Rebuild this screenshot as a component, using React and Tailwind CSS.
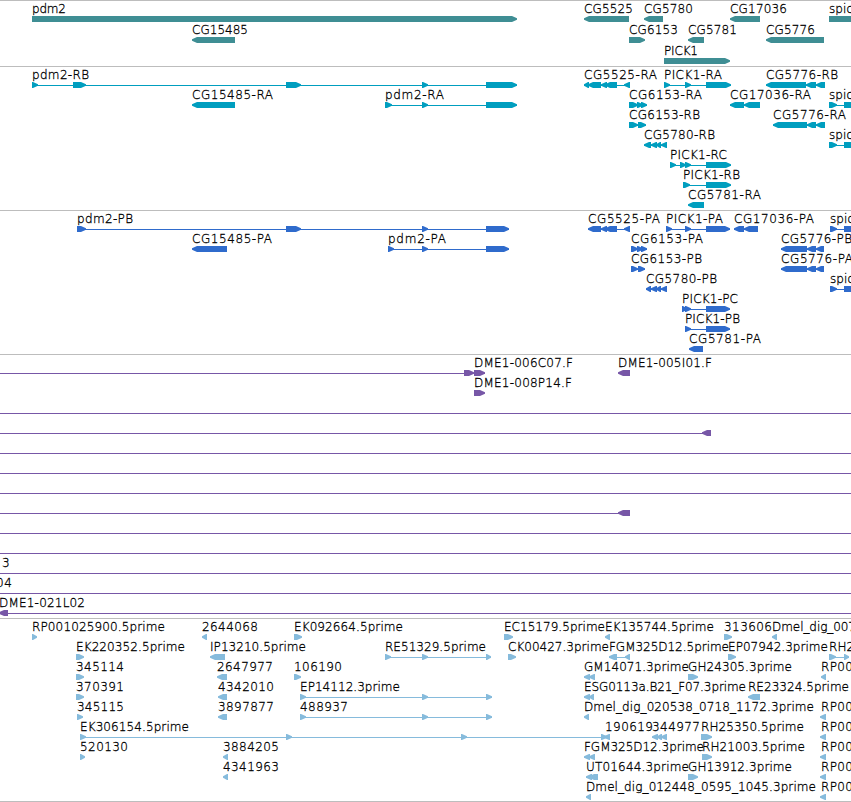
const VIEW_WIDTH = 851;

// feature: [row, label, labelX, labelWidth, direction, exons, line]
// exons are [start, end] pairs, line is the optional connector span
const SPIC_R = [[829, 837], [844, 870]];
const SPIC_P = [[830, 837], [844, 870]];

const tracks = [
  {
    id: "genes",
    className: "h-[66px] text-[#3f8e94]",
    rowHeight: 21,
    features: [
      [0, "pdm2", 32, 34, "R", [[32, 517]]],
      [0, "CG5525", 584, 49, "L", [[584, 629]]],
      [0, "CG5780", 644, 49, "L", [[644, 663]]],
      [0, "CG17036", 730, 57, "L", [[730, 760]]],
      [0, "spic", 829, 24, "R", [[829, 870]]],
      [1, "CG15485", 192, 56, "L", [[192, 235]]],
      [1, "CG6153", 629, 49, "R", [[629, 645]]],
      [1, "CG5781", 688, 49, "L", [[688, 704]]],
      [1, "CG5776", 766, 49, "L", [[766, 824]]],
      [2, "PICK1", 664, 34, "R", [[664, 730]]],
    ],
  },
  {
    id: "transcripts",
    className: "h-36 text-[#009ebf]",
    rowHeight: 20,
    features: [
      [0, "pdm2-RB", 32, 57, "R", [[32, 38], [73, 86], [286, 301], [422, 428], [486, 517]]],
      [0, "CG5525-RA", 584, 73, "L", [[584, 589], [588, 601], [601, 607], [605, 617], [624, 630]]],
      [0, "PICK1-RA", 664, 58, "R", [[664, 670], [685, 691], [706, 731]]],
      [0, "CG5776-RB", 766, 72, "L", [[766, 806], [806, 816], [816, 825]]],
      [1, "CG15485-RA", 192, 81, "L", [[192, 235]]],
      [1, "pdm2-RA", 385, 59, "R", [[385, 392], [422, 428], [486, 517]]],
      [1, "CG6153-RA", 629, 73, "R", [[629, 638], [637, 643], [641, 647]]],
      [1, "CG17036-RA", 730, 81, "L", [[730, 744], [744, 760]]],
      [1, "spic", 829, 24, "R", SPIC_R],
      [2, "CG6153-RB", 629, 71, "R", [[629, 638], [638, 646]]],
      [2, "CG5776-RA", 773, 73, "L", [[773, 807], [807, 816], [816, 825]]],
      [3, "CG5780-RB", 644, 71, "L", [[644, 651], [651, 657], [656, 661], [661, 667]]],
      [3, "spic", 829, 24, "R", SPIC_R],
      [4, "PICK1-RC", 670, 57, "R", [[670, 676], [680, 686], [685, 691], [706, 731]]],
      [5, "PICK1-RB", 683, 57, "R", [[683, 690], [706, 731]]],
      [6, "CG5781-RA", 688, 73, "L", [[688, 704]]],
    ],
  },
  {
    id: "proteins",
    className: "h-36 text-[#2f6bcc]",
    rowHeight: 20,
    features: [
      [0, "pdm2-PB", 77, 56, "R", [[77, 86], [286, 301], [422, 428], [486, 509]]],
      [0, "CG5525-PA", 588, 72, "L", [[588, 601], [601, 607], [605, 617], [624, 630]]],
      [0, "PICK1-PA", 666, 57, "R", [[666, 672], [685, 691], [706, 730]]],
      [0, "CG17036-PA", 734, 80, "L", [[734, 744], [744, 758]]],
      [0, "spic", 830, 24, "R", SPIC_P],
      [1, "CG15485-PA", 192, 80, "L", [[192, 227]]],
      [1, "pdm2-PA", 388, 58, "R", [[388, 394], [422, 428], [486, 509]]],
      [1, "CG6153-PA", 631, 72, "R", [[631, 638], [637, 643], [641, 647]]],
      [1, "CG5776-PB", 781, 71, "L", [[781, 807], [807, 816], [816, 824]]],
      [2, "CG6153-PB", 631, 71, "R", [[631, 638], [638, 645]]],
      [2, "CG5776-PA", 781, 72, "L", [[781, 807], [807, 816], [816, 824]]],
      [3, "CG5780-PB", 646, 71, "L", [[646, 651], [651, 657], [656, 661], [661, 667]]],
      [3, "spic", 830, 24, "R", SPIC_P],
      [4, "PICK1-PC", 682, 56, "R", [[682, 687], [685, 691], [706, 730]]],
      [5, "PICK1-PB", 685, 55, "R", [[685, 691], [706, 730]]],
      [6, "CG5781-PA", 689, 72, "L", [[689, 703]]],
    ],
  },
  {
    id: "bacs",
    className: "h-[264px] text-[#7757a7]",
    rowHeight: 20,
    features: [
      [0, "DME1-006C07.F", 474, 99, "R", [[464, 474], [474, 485]], [0, 485]],
      [0, "DME1-005I01.F", 618, 94, "L", [[618, 630]]],
      [1, "DME1-008P14.F", 474, 98, "R", [[474, 485]]],
      [2, "", 0, 0, "R", [], [0, 851]],
      [3, "", 0, 0, "L", [[702, 711]], [0, 711]],
      [4, "", 0, 0, "R", [], [0, 851]],
      [5, "", 0, 0, "R", [], [0, 851]],
      [6, "", 0, 0, "R", [], [0, 851]],
      [7, "", 0, 0, "L", [[618, 630]], [0, 630]],
      [8, "", 0, 0, "R", [], [0, 851]],
      [9, "", 0, 0, "R", [], [0, 851]],
      [10, "3", 2, 8, "R", [], [0, 851]],
      [11, "04", -4, 16, "R", [], [0, 851]],
      [12, "DME1-021L02", -1, 86, "L", [[-1, 8]], [0, 851]],
    ],
  },
  {
    id: "ests",
    className: "h-[183px] text-[#86bbdc]",
    rowHeight: 20,
    features: [
      [0, "RP001025900.5prime", 32, 133, "R", [[32, 37]]],
      [0, "2644068", 202, 56, "L", [[202, 207]]],
      [0, "EK092664.5prime", 294, 109, "R", [[294, 302]]],
      [0, "EC15179.5prime", 504, 101, "R", [[504, 513]]],
      [0, "EK135744.5prime", 605, 109, "L", [[605, 610]]],
      [0, "313606", 724, 48, "R", [[724, 732]]],
      [0, "Dmel_dig_007", 772, 84, "L", [[772, 777]]],
      [1, "EK220352.5prime", 76, 109, "R", [[76, 84]]],
      [1, "IP13210.5prime", 210, 96, "L", [[210, 225]]],
      [1, "RE51329.5prime", 385, 101, "R", [[385, 391], [422, 428], [486, 491]]],
      [1, "CK00427.3prime", 508, 101, "R", [[508, 516]]],
      [1, "FGM325D12.5prime", 609, 120, "L", [[609, 617], [625, 630]]],
      [1, "EP07942.3prime", 728, 100, "R", [[728, 736]]],
      [1, "RH21", 829, 33, "R", [[829, 836], [844, 849]]],
      [2, "345114", 76, 48, "R", [[76, 84]]],
      [2, "2647977", 217, 56, "L", [[217, 227]]],
      [2, "106190", 294, 48, "R", [[294, 301]]],
      [2, "GM14071.3prime", 584, 105, "L", [[584, 590], [589, 595]]],
      [2, "GH24305.3prime", 688, 104, "R", [[688, 698]]],
      [2, "RP00", 821, 32, "L", [[821, 826]]],
      [3, "370391", 76, 48, "R", [[76, 84]]],
      [3, "4342010", 218, 56, "L", [[218, 227]]],
      [3, "EP14112.3prime", 300, 100, "R", [[300, 306], [422, 428], [486, 492]]],
      [3, "ESG0113a.B21_F07.3prime", 584, 162, "L", [[584, 590], [589, 594]]],
      [3, "RE23324.5prime", 748, 101, "L", [[748, 760]]],
      [4, "345115", 77, 47, "R", [[77, 83]]],
      [4, "3897877", 218, 56, "L", [[218, 227]]],
      [4, "488937", 300, 48, "R", [[300, 306], [422, 428], [486, 492]]],
      [4, "Dmel_dig_020538_0718_1172.3prime", 584, 230, "L", [[584, 589]]],
      [4, "RP00", 821, 32, "L", [[820, 826]]],
      [5, "EK306154.5prime", 80, 109, "R", [[80, 86], [286, 292], [461, 467], [601, 607]]],
      [5, "190619", 605, 48, "L", [[604, 610]]],
      [5, "344977", 652, 48, "L", [[652, 658], [657, 662], [661, 667]]],
      [5, "RH25350.5prime", 701, 103, "R", [[701, 712]]],
      [5, "RP00", 821, 32, "L", [[820, 826]]],
      [6, "520130", 80, 48, "R", [[80, 85]]],
      [6, "3884205", 223, 56, "L", [[223, 228]]],
      [6, "FGM325D12.3prime", 584, 120, "L", [[584, 590], [589, 595]]],
      [6, "RH21003.5prime", 702, 103, "R", [[702, 712]]],
      [6, "RP00", 821, 32, "L", [[820, 826]]],
      [7, "4341963", 223, 56, "L", [[223, 228]]],
      [7, "UT01644.3prime", 586, 103, "L", [[586, 592], [589, 598]]],
      [7, "GH13912.3prime", 688, 104, "R", [[688, 698]]],
      [7, "RP00", 821, 32, "L", [[820, 826]]],
      [8, "Dmel_dig_012448_0595_1045.3prime", 586, 230, "L", [[586, 591]]],
      [8, "RP00", 821, 32, "L", [[820, 826]]],
    ],
  },
];

// bar with a slightly blunt arrow head on its leading side
function Exon({ start, end, y, dir }) {
  const head = Math.min(5, end - start - 1);
  const points =
    dir === "R"
      ? `${start},${y} ${end - head},${y} ${end},${y + 2.3} ${end},${y + 3.7} ${end - head},${y + 6} ${start},${y + 6}`
      : `${end},${y} ${start + head},${y} ${start},${y + 2.3} ${start},${y + 3.7} ${start + head},${y + 6} ${end},${y + 6}`;

  return <polygon points={points} />;
}

function Feature({ feature, rowHeight }) {
  const [row, label, labelX, labelWidth, dir, exons, line] = feature;
  const top = row * rowHeight;
  const barY = top + 15;

  let span = line;
  if (!span && exons.length > 1) {
    span = [exons[0][0], exons[exons.length - 1][1]];
  }

  return (
    <g>
      {span && (
        <rect x={span[0]} y={barY + 3} width={span[1] - span[0]} height="1" />
      )}
      {exons.map(([start, end], i) => (
        <Exon key={i} start={start} end={end} y={barY} dir={dir} />
      ))}
      {label && (
        <text
          x={labelX}
          y={top + 12}
          textLength={labelWidth}
          className="fill-black stroke-black stroke-[0.3px]"
        >
          {label}
        </text>
      )}
    </g>
  );
}

function Track({ track }) {
  return (
    <section className={`border-t border-[#bdbdbd] overflow-hidden ${track.className}`}>
      <svg
        width={VIEW_WIDTH}
        height="100%"
        className="block fill-current font-['DejaVu_Sans',sans-serif] font-extralight text-[12px]"
      >
        {track.features.map((feature, i) => (
          <Feature key={i} feature={feature} rowHeight={track.rowHeight} />
        ))}
      </svg>
    </section>
  );
}

export default function App() {
  return (
    <main className="w-[851px] h-[802px] bg-white overflow-hidden border-b border-[#bdbdbd]">
      {tracks.map((track) => (
        <Track key={track.id} track={track} />
      ))}
    </main>
  );
}
